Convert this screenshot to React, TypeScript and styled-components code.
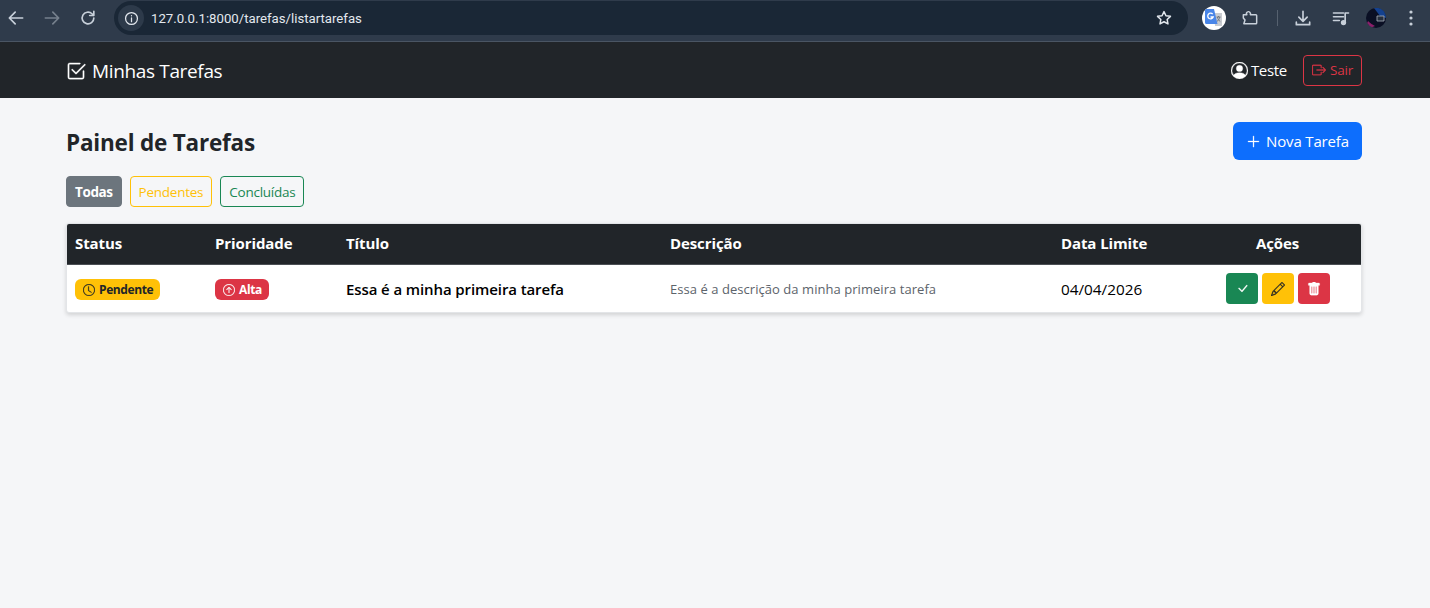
import React from "react";
import styled, { createGlobalStyle } from "styled-components";
import {
  BsArrowUpCircle,
  BsBoxArrowRight,
  BsCheck2Square,
  BsCheckLg,
  BsClock,
  BsPencil,
  BsPersonCircle,
  BsPlusLg,
  BsTrashFill
} from "react-icons/bs";

const GlobalStyle = createGlobalStyle`
  * { box-sizing: border-box; }
  html, body { margin: 0; height: 100%; }
  body {
    background: #f5f6f8;
    color: #212529;
    font-family: "Open Sans", "Noto Sans", sans-serif;
    font-size: 16px;
  }
`;

const Page = styled.div`
  height: 608px;
  overflow: hidden;
`;

const BrowserBar = styled.div`
  height: 42px;
  background: #2f3b4b;
  border-bottom: 1px solid #4a5563;
  display: flex;
  align-items: center;
  padding: 0 1px 5px 0;
`;

const NavIcon = styled.button<{ $dim?: boolean }>`
  width: 36px;
  height: 36px;
  flex: none;
  border: 0;
  padding: 0;
  background: none;
  display: flex;
  align-items: center;
  justify-content: center;
  color: ${(p) => (p.$dim ? "#76808d" : "#c8d0da")};
`;

const NavGroup = styled.div`
  display: flex;
  align-items: center;
  margin-left: -2px;
  margin-right: 8px;
`;

const Omnibox = styled.div`
  flex: 1;
  height: 34px;
  border-radius: 17px;
  background: #1a2736;
  display: flex;
  align-items: center;
  padding: 0 15px 0 4px;
  color: #e3e8ee;
  font-family: "Roboto", "Liberation Sans", sans-serif;
  font-size: 13.2px;
`;

const InfoChip = styled.span`
  width: 26px;
  height: 26px;
  border-radius: 50%;
  background: #2d3a4a;
  display: flex;
  align-items: center;
  justify-content: center;
  margin-right: 7px;
`;

const Url = styled.span`
  flex: 1;
`;

const Extensions = styled.div`
  display: flex;
  align-items: center;
  margin-left: 14px;
`;

const TranslateBadge = styled.span`
  width: 24px;
  height: 24px;
  border-radius: 50%;
  background: #fff;
  display: flex;
  align-items: center;
  justify-content: center;
  margin-right: 6px;
`;

const Separator = styled.span`
  width: 1px;
  height: 16px;
  background: #56616f;
  margin: 0 7px 0 9px;
`;

const Music = styled(NavIcon)`
  margin-left: 2px;
`;

const Avatar = styled.span`
  display: flex;
  margin: 0 7px;
`;

const Navbar = styled.nav`
  height: 56px;
  background: #212529;
  padding: 0 68px 0 66px;
  display: flex;
  align-items: center;
  justify-content: space-between;
  color: #fff;

  svg {
    stroke-width: 0.3px;
  }
`;

const Brand = styled.div`
  display: flex;
  align-items: center;
  gap: 6px;
  padding-top: 1px;
  font-size: 19px;
  letter-spacing: -0.35px;
`;

const UserArea = styled.div`
  display: flex;
  align-items: center;
`;

const UserName = styled.span`
  display: flex;
  align-items: center;
  gap: 3px;
  font-size: 15px;
  letter-spacing: -0.3px;
  margin-right: 16px;
`;

const LogoutButton = styled.button`
  height: 31px;
  width: 59px;
  border: 1px solid #dc3545;
  border-radius: 4px;
  background: none;
  color: #dc3545;
  font: inherit;
  font-size: 13.5px;
  letter-spacing: -0.25px;
  padding: 0;
  display: flex;
  align-items: center;
  justify-content: center;
  gap: 4px;
`;

const Main = styled.main`
  padding: 24px 68px 0 66px;

  svg {
    stroke-width: 0.3px;
  }
`;

const Header = styled.div`
  display: flex;
  align-items: center;
  justify-content: space-between;
  margin-bottom: 16px;
`;

const Title = styled.h1`
  margin: 0;
  padding-top: 3px;
  font-size: 22.5px;
  line-height: 35px;
  font-weight: 700;
  letter-spacing: -0.2px;
`;

const NewButton = styled.button`
  height: 38px;
  width: 129px;
  border: 0;
  border-radius: 6px;
  background: #0d6efd;
  color: #fff;
  font: inherit;
  font-size: 15px;
  letter-spacing: -0.15px;
  padding: 0;
  display: flex;
  align-items: center;
  justify-content: center;
  gap: 5px;
`;

const Filters = styled.div`
  display: flex;
  gap: 8px;
  margin-bottom: 16px;
`;

const FilterButton = styled.button<{ $color: string; $active?: boolean }>`
  height: 31px;
  padding: 0 8px;
  border: 1px solid ${(p) => p.$color};
  border-radius: 4px;
  background: ${(p) => (p.$active ? p.$color : "transparent")};
  color: ${(p) => (p.$active ? "#fff" : p.$color)};
  font: inherit;
  font-size: 13.5px;
  font-weight: ${(p) => (p.$active ? 700 : 400)};
  letter-spacing: ${(p) => (p.$active ? "-0.4px" : "-0.25px")};
`;

const Table = styled.div`
  background: #fff;
  border: 1px solid #e3e5e8;
  border-radius: 3px;
  box-shadow: 0 2px 4px rgba(0, 0, 0, 0.15);
  overflow: hidden;
`;

const Row = styled.div`
  display: grid;
  grid-template-columns: 140px 131px 324px 391px 141px 1fr;
  align-items: center;
`;

const HeadRow = styled(Row)`
  height: 41px;
  padding-bottom: 2px;
  background: #212529;
  color: #fff;
  font-weight: 700;
  font-size: 15px;
  letter-spacing: -0.1px;
  border-bottom: 1px solid #4b4f54;
`;

const BodyRow = styled(Row)`
  height: 47px;
`;

const Cell = styled.div<{ $center?: boolean }>`
  padding: 0 8px;
  display: flex;
  align-items: center;
  justify-content: ${(p) => (p.$center ? "center" : "flex-start")};
`;

const Badge = styled.span<{ $bg: string; $fg: string }>`
  display: inline-flex;
  align-items: center;
  gap: 4px;
  height: 21px;
  margin-top: 1px;
  padding: 1px 7px 0 8px;
  border-radius: 6px;
  background: ${(p) => p.$bg};
  color: ${(p) => p.$fg};
  font-size: 12px;
  font-weight: 700;
  letter-spacing: -0.4px;
`;

const TaskTitle = styled.span`
  font-size: 15px;
  font-weight: 600;
  letter-spacing: -0.1px;
  color: #000;
`;

const Description = styled.span`
  font-size: 13px;
  letter-spacing: 0.05px;
  color: #5c636a;
`;

const DueDate = styled.span`
  font-size: 15.3px;
  color: #000;
`;

const Actions = styled.div`
  display: flex;
  gap: 4px;
  padding-left: 32px;
`;

const ActionButton = styled.button<{ $bg: string; $fg: string }>`
  width: 32px;
  height: 31px;
  border: 0;
  border-radius: 4px;
  padding: 0;
  background: ${(p) => p.$bg};
  color: ${(p) => p.$fg};
  display: flex;
  align-items: center;
  justify-content: center;
`;

const Stroke = ({ children, size = 20, w = 2 }: { children: React.ReactNode; size?: number; w?: number }) => (
  <svg width={size} height={size} viewBox="0 0 24 24" fill="none" stroke="currentColor" strokeWidth={w} strokeLinecap="round" strokeLinejoin="round">
    {children}
  </svg>
);

export default function App() {
  return (
    <Page>
      <GlobalStyle />
      <BrowserBar>
        <NavGroup>
          <NavIcon>
            <Stroke><path d="M20 12H5M11 5l-7 7 7 7" /></Stroke>
          </NavIcon>
          <NavIcon $dim>
            <Stroke><path d="M4 12h15M13 5l7 7-7 7" /></Stroke>
          </NavIcon>
          <NavIcon>
            <Stroke><path d="M19 12a7 7 0 1 1-2.2-5.1L19 9M19 4v5h-5" /></Stroke>
          </NavIcon>
        </NavGroup>
        <Omnibox>
          <InfoChip>
            <Stroke size={15}><circle cx="12" cy="12" r="9.5" /><path d="M12 11v6M12 7.5v.2" /></Stroke>
          </InfoChip>
          <Url>127.0.0.1:8000/tarefas/listartarefas</Url>
          <Stroke size={18}><path d="M12 3.5l2.6 5.5 6 .8-4.4 4.1 1.1 6L12 17l-5.3 2.9 1.1-6-4.4-4.1 6-.8z" /></Stroke>
        </Omnibox>
        <Extensions>
          <TranslateBadge>
            <svg width="20" height="20" viewBox="0 0 20 20">
              <path d="M10 5h8v13h-7z" fill="#c9ccd1" />
              <path d="M12.5 9h4M14.5 8v1M13.3 9c.4 2 1.6 3.6 3 4.6M15.8 9c-.4 2-1.6 3.6-3 4.6" fill="none" stroke="#6b7078" strokeWidth="0.9" />
              <path d="M1 2.5a1.5 1.5 0 0 1 1.5-1.5H10l3.5 15H2.5A1.5 1.5 0 0 1 1 14.5z" fill="#4a86e8" />
              <path d="M8.7 6.2A2.8 2.8 0 1 0 9.2 9H6.5" fill="none" stroke="#fff" strokeWidth="1.3" />
            </svg>
          </TranslateBadge>
          <NavIcon>
            <Stroke w={1.8}><path d="M4 8h4.2a2.3 2.3 0 0 1 3.8-2.6 2.3 2.3 0 0 1 .4 2.6H19a1 1 0 0 1 1 1v9a1 1 0 0 1-1 1H6.5L4.6 19 6 14.5 4 12z" /></Stroke>
          </NavIcon>
          <Separator />
          <NavIcon>
            <Stroke><path d="M12 4v12M7 11l5 5 5-5M4 17v3h16v-3" /></Stroke>
          </NavIcon>
          <Music>
            <Stroke><path d="M3 6h12M3 10.5h12M3 15h7" /><circle cx="15" cy="17.5" r="2.2" fill="currentColor" /><path d="M17 17.5V6h4" /></Stroke>
          </Music>
          <Avatar>
            <svg width="20" height="20" viewBox="0 0 20 20">
              <circle cx="10" cy="10" r="10" fill="#0a0f24" />
              <path d="M8 0a10 10 0 0 1 12 10l-6-2-3-4z" fill="#14418f" />
              <path d="M2 13c2 2 5 4 7 5l-3 1.2A10 10 0 0 1 1.2 15z" fill="#8a1f6b" />
              <path d="M11 8h7v5h-7z" fill="#27303f" stroke="#a9b1bc" strokeWidth="0.8" />
            </svg>
          </Avatar>
          <NavIcon>
            <svg width="20" height="20" viewBox="0 0 20 20" fill="currentColor">
              <circle cx="10" cy="4" r="1.6" /><circle cx="10" cy="10" r="1.6" /><circle cx="10" cy="16" r="1.6" />
            </svg>
          </NavIcon>
        </Extensions>
      </BrowserBar>

      <Navbar>
        <Brand>
          <BsCheck2Square size={20} />
          Minhas Tarefas
        </Brand>
        <UserArea>
          <UserName>
            <BsPersonCircle size={17} />
            Teste
          </UserName>
          <LogoutButton>
            <BsBoxArrowRight size={14} />
            Sair
          </LogoutButton>
        </UserArea>
      </Navbar>

      <Main>
        <Header>
          <Title>Painel de Tarefas</Title>
          <NewButton>
            <BsPlusLg size={15} />
            Nova Tarefa
          </NewButton>
        </Header>

        <Filters>
          <FilterButton $color="#6c757d" $active>Todas</FilterButton>
          <FilterButton $color="#ffc107">Pendentes</FilterButton>
          <FilterButton $color="#198754">Concluídas</FilterButton>
        </Filters>

        <Table>
          <HeadRow>
            <Cell>Status</Cell>
            <Cell>Prioridade</Cell>
            <Cell>Título</Cell>
            <Cell>Descrição</Cell>
            <Cell>Data Limite</Cell>
            <Cell $center>Ações</Cell>
          </HeadRow>
          <BodyRow>
            <Cell>
              <Badge $bg="#ffc107" $fg="#212529">
                <BsClock size={12} />
                Pendente
              </Badge>
            </Cell>
            <Cell>
              <Badge $bg="#dc3545" $fg="#fff">
                <BsArrowUpCircle size={12} />
                Alta
              </Badge>
            </Cell>
            <Cell><TaskTitle>Essa é a minha primeira tarefa</TaskTitle></Cell>
            <Cell><Description>Essa é a descrição da minha primeira tarefa</Description></Cell>
            <Cell><DueDate>04/04/2026</DueDate></Cell>
            <Actions>
              <ActionButton $bg="#198754" $fg="#fff"><BsCheckLg size={13} /></ActionButton>
              <ActionButton $bg="#ffc107" $fg="#212529"><BsPencil size={14} /></ActionButton>
              <ActionButton $bg="#dc3545" $fg="#fff"><BsTrashFill size={14} /></ActionButton>
            </Actions>
          </BodyRow>
        </Table>
      </Main>
    </Page>
  );
}
